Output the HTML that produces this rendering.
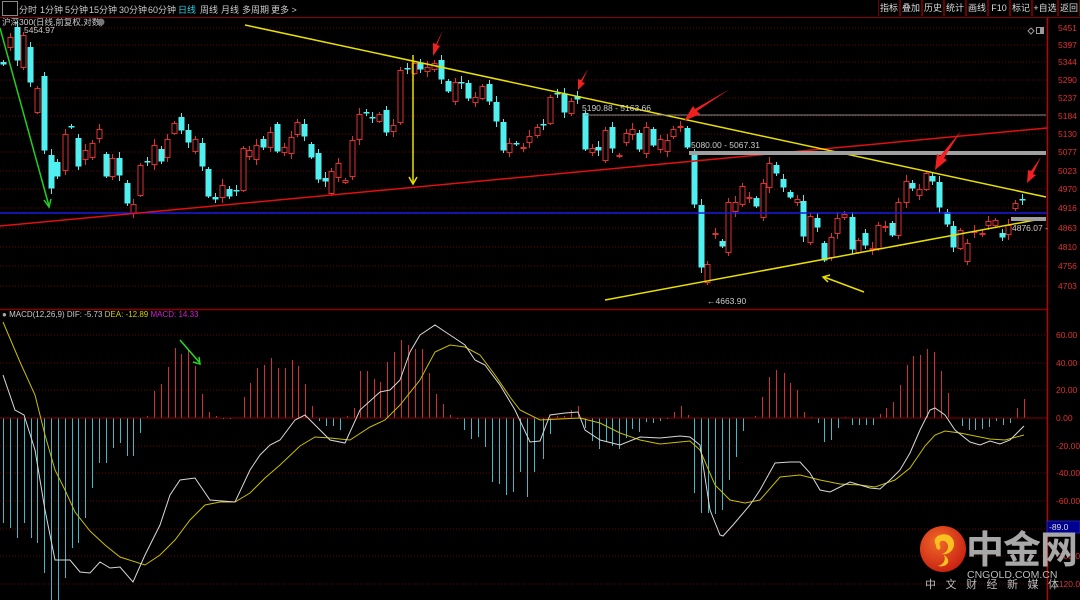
<!DOCTYPE html>
<html><head><meta charset="utf-8">
<style>
html,body{margin:0;padding:0;background:#000;}
body{width:1080px;height:600px;overflow:hidden;position:relative;font-family:"Liberation Sans","Noto Sans CJK SC",sans-serif;}
#top{position:absolute;left:0;top:0;width:1080px;height:17px;border-bottom:1px solid #8a0000;font-size:9px;color:#ccc;}
#top span{position:absolute;top:3px;}
.btn{position:absolute;top:0;height:16px;border-left:1px solid #6a0000;border-right:1px solid #6a0000;color:#ddd;font-size:9px;line-height:16px;text-align:center;}
svg{position:absolute;left:0;top:0;}
</style></head><body>
<svg id="s" width="1080" height="600" xmlns="http://www.w3.org/2000/svg" font-family="Liberation Sans, Noto Sans CJK SC, sans-serif">
<defs>
<radialGradient id="lg" cx="40%" cy="35%" r="70%"><stop offset="0" stop-color="#f06a2a"/><stop offset="1" stop-color="#c81e10"/></radialGradient>
</defs>
<g id="grid"></g>
<g id="cand"></g>
<g id="macd"></g>
<line x1="0" y1="309.5" x2="1047" y2="309.5" stroke="#8a0000" stroke-width="1.5"/>
<line x1="1047.5" y1="18" x2="1047.5" y2="600" stroke="#c00000" stroke-width="1.5"/>
<line x1="0" y1="213" x2="1047" y2="213" stroke="#1a1ae0" stroke-width="1.5"/>
<line x1="0" y1="226" x2="1047" y2="128" stroke="#e01010" stroke-width="1.5"/>
<line x1="245" y1="25" x2="1046" y2="197" stroke="#e8e000" stroke-width="1.5"/>
<line x1="605" y1="300" x2="1046" y2="218" stroke="#e8e000" stroke-width="1.5"/>
<line x1="585" y1="115" x2="1046" y2="115" stroke="#888" stroke-width="1"/>
<rect x="689" y="151" width="357" height="4" fill="#a0a0a0"/>
<rect x="1011" y="217" width="35" height="4" fill="#a0a0a0"/>
<text x="582" y="111" font-size="8.5" fill="#ccc">5190.88 - 5163.66</text>
<text x="691" y="148" font-size="8.5" fill="#ccc">5080.00 - 5067.31</text>
<text x="1012" y="231" font-size="8.5" fill="#ccc">4876.07 -</text>
<text x="707" y="304" font-size="8.5" fill="#ccc">←4663.90</text>
<text x="24" y="33" font-size="8.5" fill="#ccc">5454.97</text>
<line x1="20" y1="28" x2="20" y2="33" stroke="#ccc"/>
<line x1="413" y1="55" x2="413" y2="183" stroke="#e8e000" stroke-width="1.5"/>
<path d="M409,177 L413,184 L417,177" fill="none" stroke="#e8e000" stroke-width="1.5"/>
<line x1="864" y1="292" x2="824" y2="277" stroke="#e8e000" stroke-width="1.5"/>
<path d="M830,275 L823,277 L828,282" fill="none" stroke="#e8e000" stroke-width="1.5"/>
<line x1="0" y1="28" x2="49" y2="206" stroke="#20d020" stroke-width="1.5"/>
<path d="M44,200 L49,207 L51,199" fill="none" stroke="#20d020" stroke-width="1.5"/>
<line x1="180" y1="340" x2="199" y2="362" stroke="#20e020" stroke-width="1.5"/>
<path d="M193,362 L200,364 L199,357" fill="none" stroke="#20e020" stroke-width="1.5"/>
<g fill="#f02020">
<path d="M443,30 L437,45 L440,46 L433,56 L433,43 L436,44 Z"/>
<path d="M588,69 L582,82 L585,83 L578,90 L578,79 L581,80 Z"/>
<path d="M730,89 L697,111 L700,114 L684,121 L693,106 L695,109 Z"/>
<path d="M961,131 L944,158 L947,160 L935,170 L937,154 L940,156 Z"/>
<path d="M1041,157 L1033,174 L1036,175 L1027,183 L1028,170 L1031,171 Z"/>
</g>
<g font-size="8.5" fill="#e03030" id="ax"></g>
<rect x="1047" y="521" width="33" height="12" fill="#000090" stroke="#4040ff" stroke-width="0.5"/>
<text x="1049" y="530" font-size="8.5" fill="#ddd">-89.0</text>
<path d="M1031,28 L1034,31 L1031,34 L1028,31 Z" fill="none" stroke="#999"/>
<rect x="1036.5" y="27.5" width="7" height="6" fill="none" stroke="#999"/>
<rect x="1040" y="28" width="3" height="5" fill="#999"/>
<text x="2" y="25" font-size="8.5" fill="#ccc">沪深300(日线,前复权,对数)</text>
<circle cx="101" cy="22" r="3.5" fill="#777"/>
<text x="2" y="317" font-size="8" fill="#ccc"><tspan fill="#aaa">●</tspan> MACD(12,26,9) DIF: -5.73 <tspan fill="#d0d000">DEA: -12.89</tspan> <tspan fill="#d020d0">MACD: 14.33</tspan></text>
<circle cx="943" cy="549" r="23" fill="url(#lg)"/>
<path d="M936,545 C930,536 946,530 952,538 C958,546 950,556 942,554 C948,552 950,546 946,542 C942,539 938,542 940,546 C942,550 936,552 936,545 Z M944,555 C952,560 948,568 938,566 C944,564 946,560 944,555 Z" fill="#f8c020"/>
<text x="966" y="563" font-size="38" font-weight="bold" fill="#a8a8a8" font-family="Noto Sans CJK SC, sans-serif" letter-spacing="-1">中金网</text>
<text x="967" y="578" font-size="10.5" fill="#bbb">CNGOLD.COM.CN</text>
<text x="925" y="588" font-size="11" fill="#bbb" letter-spacing="9.5" font-family="Noto Sans CJK SC, sans-serif">中文财经新媒体</text>
</svg>
<div id="top">
<div class="btn" style="left:2px;width:14px;border:1px solid #888;top:1px;height:13px"></div>
<span style="left:19px">分时</span><span style="left:40px">1分钟</span><span style="left:65px">5分钟</span><span style="left:89px">15分钟</span><span style="left:119px">30分钟</span><span style="left:148px">60分钟</span><span style="left:178px;color:#30d0e0">日线</span><span style="left:200px">周线</span><span style="left:221px">月线</span><span style="left:242px">多周期</span><span style="left:271px">更多 &gt;</span>
<div class="btn" style="left:878px;width:20px">指标</div>
<div class="btn" style="left:900px;width:20px">叠加</div>
<div class="btn" style="left:922px;width:20px">历史</div>
<div class="btn" style="left:944px;width:20px">统计</div>
<div class="btn" style="left:966px;width:20px">画线</div>
<div class="btn" style="left:988px;width:20px">F10</div>
<div class="btn" style="left:1010px;width:20px">标记</div>
<div class="btn" style="left:1032px;width:24px">+自选</div>
<div class="btn" style="left:1058px;width:20px">返回</div>
</div>
<script>
var NS="http://www.w3.org/2000/svg";
function el(p,t,a){var e=document.createElementNS(NS,t);for(var k in a)e.setAttribute(k,a[k]);p.appendChild(e);return e;}
var g=document.getElementById('grid'),ax=document.getElementById('ax');
var pl=[[5451,28],[5397,45],[5344,62],[5290,80],[5237,98],[5184,116],[5130,134],[5077,152],[5023,171],[4970,189],[4916,208],[4863,228],[4810,247],[4756,266],[4703,286]];
pl.forEach(function(p){el(g,'line',{x1:0,y1:p[1],x2:1047,y2:p[1],stroke:'#6a0000','stroke-dasharray':'1,2'});el(ax,'text',{x:1058,y:p[1]+3}).textContent=p[0];});
var ml=[["60.00",335],["40.00",363],["20.00",390],["0.00",418],["-20.00",446],["-40.00",473],["-60.00",501],["-80.00",529],["-100.0",556],["-120.0",584]];
ml.forEach(function(p){el(g,'line',{x1:0,y1:p[1],x2:1047,y2:p[1],stroke:'#6a0000','stroke-dasharray':'1,2'});el(ax,'text',{x:1056,y:p[1]+3}).textContent=p[0];});
var C=[[3,62,64,0],[10,37,47,1],[17,27,60,0],[23,35,67,1],[30,47,82,0],[37,88,112,1],[44,76,150,0],[51,155,188,0],[57,162,176,0],[65,134,170,1],[71,126,127,0],[78,138,166,0],[85,150,159,1],[92,143,157,1],[99,129,138,1],[106,154,176,0],[112,158,176,1],[119,158,175,0],[127,183,203,0],[133,204,213,1],[140,165,195,1],[147,161,162,0],[154,145,164,1],[161,149,161,0],[167,139,157,1],[174,123,133,1],[181,117,130,0],[188,130,142,0],[195,139,151,1],[202,143,166,0],[208,169,196,0],[215,197,199,0],[222,185,197,1],[229,189,196,0],[236,190,191,0],[243,148,190,1],[249,150,156,1],[256,145,159,1],[263,139,147,0],[270,132,147,1],[277,124,151,0],[284,147,152,1],[291,137,153,1],[297,122,134,1],[304,124,136,0],[311,144,157,0],[318,153,179,0],[325,178,181,0],[331,171,193,1],[338,163,177,1],[345,180,182,1],[352,140,176,1],[359,114,139,1],[366,112,113,0],[372,117,118,0],[379,114,121,1],[386,110,132,0],[393,125,131,1],[400,70,122,1],[407,68,69,0],[414,63,73,1],[420,63,69,0],[427,67,71,1],[434,63,69,1],[441,60,79,0],[448,81,91,0],[455,82,101,1],[461,82,83,0],[468,83,98,0],[475,97,102,1],[482,86,98,1],[489,84,101,0],[496,102,121,0],[503,122,150,0],[509,143,152,1],[516,143,144,0],[523,147,148,1],[529,136,142,1],[537,127,135,1],[543,124,125,0],[550,97,123,1],[557,93,94,0],[564,94,112,0],[571,101,113,1],[577,96,99,0],[585,113,149,0],[592,148,152,1],[598,147,150,0],[605,130,160,1],[612,127,148,0],[619,155,156,1],[626,133,142,1],[632,129,134,1],[639,133,149,0],[646,127,153,1],[653,129,145,0],[660,139,149,1],[667,140,151,1],[673,129,136,1],[680,126,127,1],[687,128,147,0],[694,153,204,0],[701,205,267,0],[707,264,282,1],[715,233,234,1],[722,241,246,0],[728,202,252,1],[735,202,211,1],[742,186,204,1],[749,197,198,1],[756,198,206,0],[763,183,217,1],[769,163,187,1],[776,165,173,0],[783,179,187,0],[790,192,197,0],[797,199,202,1],[803,201,236,0],[810,216,242,1],[817,218,227,0],[824,243,260,0],[831,237,257,1],[837,218,233,1],[844,214,217,1],[852,217,249,0],[858,240,252,1],[865,233,245,0],[872,248,249,1],[878,225,248,1],[885,226,227,1],[892,223,235,0],[898,202,235,1],[906,181,202,1],[912,183,188,0],[919,189,195,1],[926,173,189,1],[932,176,181,0],[939,182,207,0],[947,212,224,0],[953,226,247,0],[960,230,248,1],[967,243,261,1],[974,231,232,1],[982,233,234,1],[988,221,225,1],[995,220,225,1],[1002,233,237,0],[1008,225,234,1],[1015,203,208,1],[1022,199,200,0]];
var cg=document.getElementById('cand');
C.forEach(function(c,i){var col=c[3]?'#e03030':'#50f0f0';var wk=2+((i*7)%5);
el(cg,'line',{x1:c[0]+0.5,y1:c[1]-wk,x2:c[0]+0.5,y2:c[2]+wk,stroke:col});
var h=Math.max(1,c[2]-c[1]);
if(c[3])el(cg,'rect',{x:c[0]-2,y:c[1]+0.5,width:5,height:h,fill:'#000',stroke:col});
else el(cg,'rect',{x:c[0]-2.5,y:c[1],width:6,height:h+0.5,fill:col});});
var K=[[3,-105],[10,-110],[17,-120],[24,-105],[31,-120],[37,-125],[44,-155],[51,-190],[58,-190],[65,-160],[72,-130],[78,-125],[85,-100],[92,-70],[99,-45],[106,-45],[113,-30],[120,-25],[127,-38],[133,-38],[140,-15],[147,2],[154,27],[161,34],[168,51],[175,70],[181,64],[188,69],[195,52],[202,24],[209,6],[216,2],[223,-1],[230,-1],[237,0],[244,21],[250,35],[257,50],[264,53],[271,60],[278,50],[285,50],[292,58],[298,52],[305,34],[312,12],[319,-3],[326,-8],[333,-8],[340,-12],[347,2],[354,10],[360,47],[367,47],[374,39],[380,36],[387,56],[394,66],[401,78],[408,73],[415,69],[422,69],[429,45],[436,24],[443,14],[450,3],[457,-1],[464,-12],[471,-21],[478,-19],[485,-29],[492,-64],[499,-66],[506,-77],[513,-74],[520,-54],[527,-79],[534,-54],[543,-41],[550,-16],[557,2],[564,2],[571,8],[578,12],[585,-10],[592,-23],[599,-31],[606,-24],[612,-28],[619,-31],[626,-20],[632,-11],[639,-14],[646,-4],[653,-5],[660,-3],[667,-1],[674,6],[681,12],[688,3],[694,-75],[701,-95],[708,-95],[715,-96],[722,-92],[729,-62],[736,-39],[743,-13],[749,0],[755,2],[762,21],[769,41],[776,48],[784,45],[790,35],[797,28],[804,6],[811,1],[818,-5],[824,-24],[831,-22],[838,-10],[845,1],[852,-7],[859,-7],[866,-7],[873,-7],[880,4],[886,10],[893,16],[900,33],[907,53],[913,62],[920,63],[927,69],[934,66],[941,47],[948,25],[955,0],[962,-8],[969,-12],[975,-12],[982,-11],[989,-9],[996,-3],[1003,-7],[1010,-5],[1017,10],[1024,19]];
var mg=document.getElementById('macd');
K.forEach(function(k){if(k[1]==0)return;var y=418-k[1];el(mg,'line',{x1:k[0]+0.5,y1:Math.min(y,418),x2:k[0]+0.5,y2:Math.max(y,418),stroke:k[1]>0?'#d03030':'#40b8c8'});});
el(mg,'line',{x1:0,y1:418,x2:1047,y2:418,stroke:'#8a0000'});
var D=[[3,375],[15,410],[24,415],[35,450],[45,510],[55,560],[60,560],[70,560],[80,572],[90,573],[100,562],[110,568],[120,567],[133,582],[145,555],[160,525],[170,495],[180,480],[195,478],[210,500],[235,502],[250,470],[260,455],[270,445],[280,440],[295,420],[305,415],[315,425],[330,440],[345,443],[360,410],[380,392],[390,390],[400,380],[410,352],[420,335],[435,325],[450,335],[465,345],[475,360],[485,365],[500,385],[515,410],[530,442],[540,441],[550,415],[565,413],[578,412],[585,430],[600,440],[620,445],[640,437],[660,438],[680,436],[690,437],[700,445],[710,510],[720,535],[723,536],[733,525],[750,505],[760,490],[775,463],[790,462],[800,462],[810,473],[820,490],[830,492],[840,487],[850,482],[860,485],[870,488],[880,489],[890,480],[900,470],[910,453],[920,430],[930,410],[935,408],[945,415],[955,430],[970,442],[980,445],[990,441],[1000,444],[1010,440],[1024,426]];
var E=[[3,322],[20,362],[35,395],[45,435],[55,470],[65,490],[75,512],[90,531],[105,545],[120,557],[145,565],[160,555],[175,540],[190,520],[205,505],[220,502],[235,502],[250,493],[265,478],[280,465],[300,446],[315,437],[330,438],[350,440],[370,427],[385,420],[400,405],[420,380],[435,352],[450,345],[465,347],[480,355],[495,375],[510,397],[520,410],[540,420],[560,419],[580,418],[600,423],[620,433],[640,440],[660,444],[680,442],[690,441],[700,450],[715,485],[730,500],[745,503],[760,500],[780,477],[800,475],[820,480],[840,484],[860,485],[875,487],[895,480],[910,468],[925,446],[935,435],[945,431],[960,433],[975,436],[990,439],[1005,440],[1024,435]];
function pts(a){return a.map(function(p){return p[0]+','+p[1]}).join(' ');}
el(mg,'polyline',{points:pts(E),fill:'none',stroke:'#c8c000','stroke-width':1});
el(mg,'polyline',{points:pts(D),fill:'none',stroke:'#d8d8d8','stroke-width':1});
</script>
</body></html>
